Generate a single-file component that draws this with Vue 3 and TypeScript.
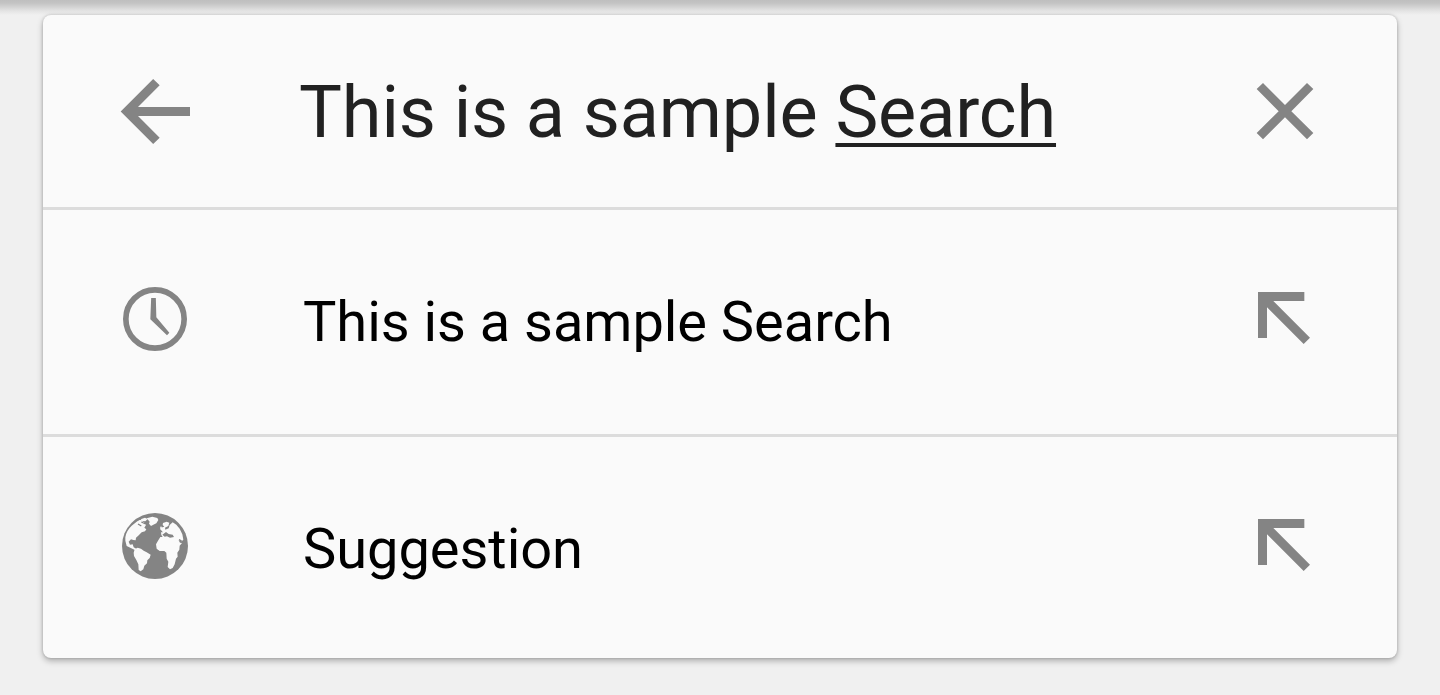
<script setup lang="ts">
import { ref } from 'vue'

interface Suggestion {
  text: string
  kind: 'history' | 'web'
}

const typed = ref<string>('This is a sample ')
const composing = ref<string>('Search')
const suggestions = ref<Suggestion[]>([
  { text: 'This is a sample Search', kind: 'history' },
  { text: 'Suggestion', kind: 'web' },
])
</script>

<template>
  <main class="screen">
    <div class="toolbar-shadow"></div>
    <section class="card">
      <header class="line search">
        <svg class="lead" viewBox="0 0 270 240" aria-label="Back">
          <path d="M32 124.500L129.500 27L149 46L84 111H240V138H84L149 203L129.500 222Z" />
        </svg>
        <div class="query">{{ typed }}<span class="composing">{{ composing }}</span></div>
        <svg class="trail" viewBox="0 0 240 240" aria-label="Clear">
          <path d="M54 39L120 105L186 39L205 57L139 123.500L205 189L186 208L120 142L54 208L35 189L101 123.500L35 57Z" />
        </svg>
      </header>
      <div v-for="item in suggestions" :key="item.text" class="line suggestion">
        <svg v-if="item.kind === 'history'" class="lead" viewBox="0 0 270 270">
          <circle class="ring" cx="135" cy="132" r="87.500" />
          <path d="M123.500 69H137.500L139 127L178 173L171 181L121 133Z" />
        </svg>
        <svg v-else class="lead" viewBox="0 6 270 270">
          <circle cx="135" cy="138" r="99" />
          <g class="land">
            <path d="M80 65L89 60L101 66L108 75L103 83L109 88L105 94L95 97L87 105L78 113L77 121L70 120L63 118L56 125L60 134L68 133L71 142L80 147L76 151L64 145L50 138L46 122L46 112Q48 93 65 77Z" />
            <path d="M81 66L91 60L99 61L96 66L102 71L98 76L91 75L86 81L78 80L77 72Z" />
            <path d="M92 58L105 53L113 57L106 64L97 63Z" />
            <path d="M110 55L127 50L142 54L145 60L139 70L130 74L123 78L117 71L119 65Z" />
            <path d="M74 148L83 143L93 146L101 152L110 157L122 164L119 174L112 181L111 190L103 197L100 208L92 214L86 210L85 193L79 180L72 168L71 158Z" />
            <path d="M151 88L157 82L163 80L158 75L159 69L170 65L178 68L175 78L165 83L166 89L176 85L179 75L188 67L199 74L209 86L217 103L220 119L215 124L206 121L210 128L216 129L209 137L208 149L202 158L203 170L198 176L194 193L188 204L180 208L173 201L175 185L170 176L169 158L163 153L149 153L140 146L138 133L144 122L151 111L158 111L154 105L153 97L160 96L164 103Z" />
            <path d="M150 84L153 78L157 85L153 90Z" />
          </g>
          <path d="M157 104L168 96L176 102L188 104L192 111L180 113L171 109L164 110Z" />
          <path class="coast" d="M84 72L94 78M94 66L107 72M62 126L67 125M207 119L215 123" />
        </svg>
        <div class="label">{{ item.text }}</div>
        <svg class="trail" viewBox="0 0 240 240" aria-label="Use suggestion">
          <path d="M39 36H178V63H85L195 173L176 192L66 82V174H39Z" />
        </svg>
      </div>
    </section>
  </main>
</template>

<style>
body {
  margin: 0;
  background: #f0f0f0;
}
</style>

<style scoped>
.screen {
  box-sizing: border-box;
  position: relative;
  height: 695px;
  padding: 15px 43px 37px;
  overflow: hidden;
  background: #f0f0f0;
  font-family: Roboto, "Liberation Sans", sans-serif;
}

.toolbar-shadow {
  position: absolute;
  top: 0;
  left: 0;
  right: 0;
  height: 15px;
  background: linear-gradient(#bfbfbf 0, #c3c3c3 3px, #d3d3d3 7px, #e4e4e4 11px, #f0f0f0 15px);
}

.card {
  position: relative;
  height: 643px;
  border-radius: 8px;
  background: #fafafa;
  box-shadow: 0 3px 6px rgba(0, 0, 0, 0.28), 0 0 3px rgba(0, 0, 0, 0.18);
}

.line {
  box-sizing: border-box;
  display: grid;
  grid-template-columns: 90px 1fr 80px;
  align-items: start;
  padding: 0 72px 0 67px;
}

.line + .line {
  border-top: 3px solid #dcdcdc;
}

.search {
  height: 192px;
  padding-top: 55px;
}

.suggestion {
  height: 227px;
  padding-top: 65px;
}

svg {
  display: block;
  fill: #848484;
}

.lead {
  width: 90px;
}

.trail {
  width: 80px;
  height: 80px;
}

.suggestion .trail {
  margin-top: 5px;
}

.ring {
  fill: none;
  stroke: #848484;
  stroke-width: 17;
}

.land {
  fill: #fafafa;
}

.coast {
  fill: none;
  stroke: #848484;
  stroke-width: 4;
}

.query {
  margin-top: 1px;
  padding-left: 99px;
  color: #212121;
  font-size: 72px;
  line-height: 84px;
  letter-spacing: -0.1px;
  white-space: pre;
}

.composing {
  text-decoration: underline;
  text-decoration-thickness: 4px;
  text-decoration-skip-ink: none;
  text-underline-offset: 6px;
}

.label {
  margin-top: 14px;
  padding-left: 103px;
  color: #000;
  font-size: 56px;
  line-height: 66px;
  letter-spacing: -0.04px;
  white-space: nowrap;
}
</style>
